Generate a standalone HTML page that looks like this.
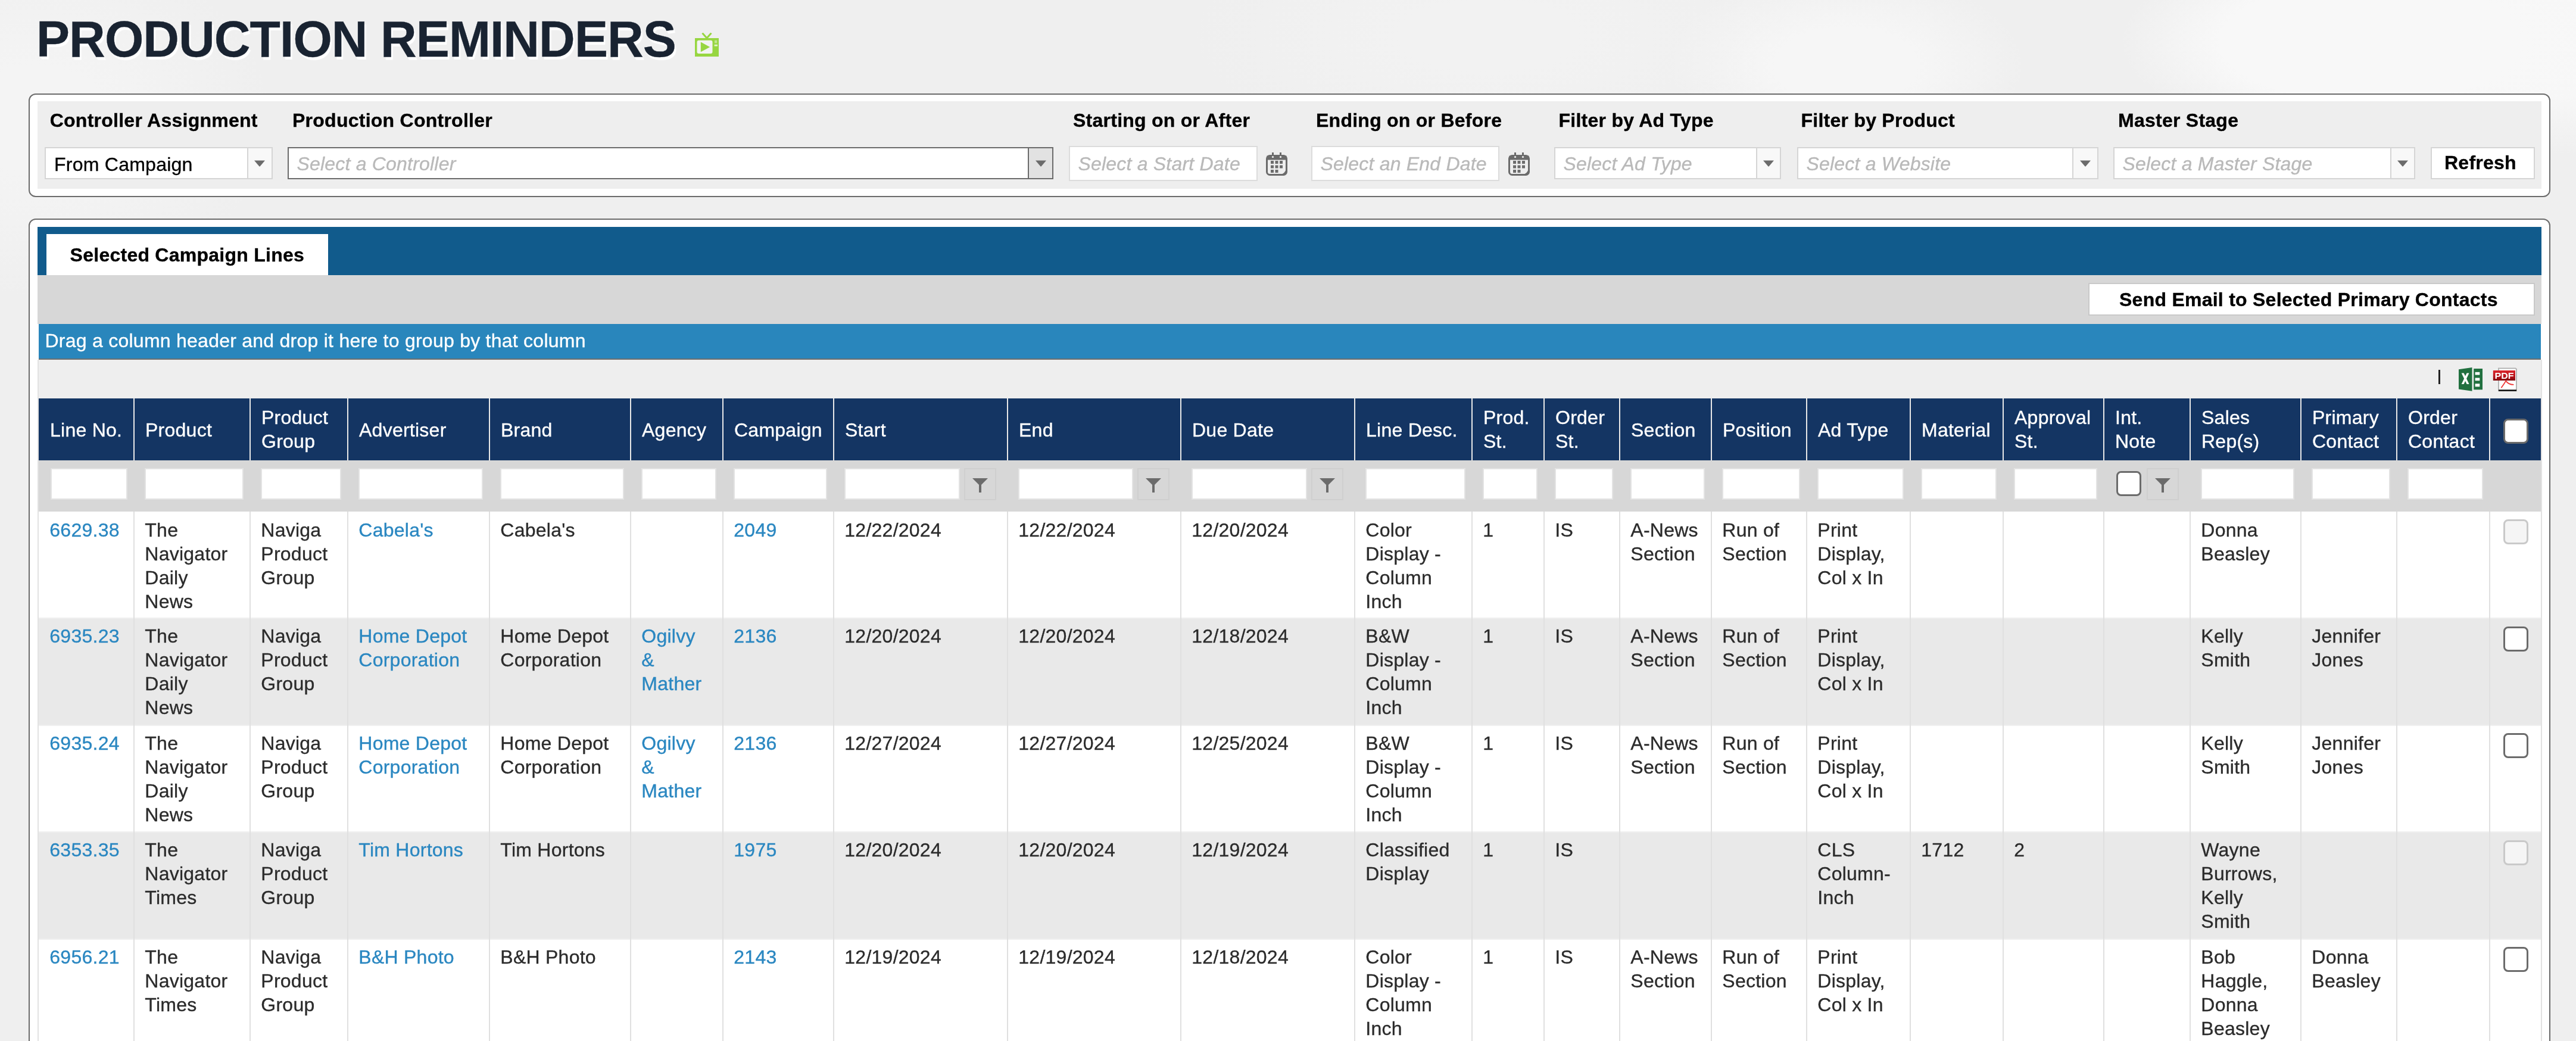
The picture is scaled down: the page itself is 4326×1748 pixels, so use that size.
<!DOCTYPE html><html><head><meta charset="utf-8"><title>Production Reminders</title><style>
*{margin:0;padding:0;box-sizing:border-box}
html,body{width:4326px;height:1748px;overflow:hidden}
body{position:relative;font-family:"Liberation Sans",sans-serif;color:#2b2b2b;
 background:#efefef;}
#w{position:absolute;left:0;top:0;width:4326px;height:1748px;overflow:hidden;will-change:transform}
.t{position:absolute;white-space:nowrap;letter-spacing:0.25px;-webkit-text-stroke:0.35px currentColor}
.b{position:absolute}
.bold{font-weight:bold;color:#000}
.ph{font-style:italic;color:#b9b9b9;letter-spacing:0.2px}
.lnk{color:#2a87c1}
.wh{color:#fff}
</style></head><body><div id="w">
<div class="b" style="left:0;top:0;width:4326px;height:1748px;background:radial-gradient(ellipse 420px 170px at 3980px 70px,#f8f8f8 60%,rgba(248,248,248,0) 100%),radial-gradient(ellipse 360px 200px at 4300px 60px,#f7f7f7 50%,rgba(247,247,247,0) 100%),radial-gradient(ellipse 300px 160px at 3100px 110px,#f6f6f6 40%,rgba(246,246,246,0) 100%),radial-gradient(ellipse 500px 200px at 2500px 60px,#f2f2f2 30%,rgba(242,242,242,0) 100%),radial-gradient(ellipse 400px 300px at 60px 200px,#f4f4f4 30%,rgba(244,244,244,0) 100%),#efefef"></div>
<div class="t " style="left:61.0px;top:15.1px;font-size:86px;line-height:100px;font-weight:bold;color:#192331;letter-spacing:-1px;text-shadow:3px 5px 1px #fff;transform:scaleX(0.978);transform-origin:0 0">PRODUCTION REMINDERS</div>
<svg class="b" style="left:1167px;top:55px" width="40" height="40" viewBox="0 0 40 40">
<rect x="0" y="9" width="40" height="31" fill="#97d641"/>
<path d="M12.5 0.5 L20 9 L27.5 0.5" stroke="#97d641" stroke-width="3" fill="none"/>
<rect x="3.5" y="12.7" width="26" height="22.3" rx="3" fill="#f3f3f3"/>
<path d="M9.8 15.6 L9.8 32.2 L25.2 24 Z" fill="#97d641"/>
<rect x="33" y="12.7" width="4.2" height="4.7" fill="#c2e592"/>
<rect x="32.6" y="19.8" width="5.4" height="2.8" fill="#e2f3cc"/>
</svg>
<div class="b" style="left:48px;top:157px;width:4235px;height:174px;border:2px solid #6b6b6b;border-radius:12px;background:#fff"></div>
<div class="b" style="left:63px;top:170px;width:4205px;height:147px;background:#eeeeee"></div>
<div class="t bold" style="left:83.7px;top:182.3px;font-size:32px;line-height:40px;">Controller Assignment</div>
<div class="t bold" style="left:491.0px;top:182.3px;font-size:32px;line-height:40px;">Production Controller</div>
<div class="t bold" style="left:1802.0px;top:182.3px;font-size:32px;line-height:40px;">Starting on or After</div>
<div class="t bold" style="left:2210.0px;top:182.3px;font-size:32px;line-height:40px;">Ending on or Before</div>
<div class="t bold" style="left:2617.5px;top:182.3px;font-size:32px;line-height:40px;">Filter by Ad Type</div>
<div class="t bold" style="left:3024.5px;top:182.3px;font-size:32px;line-height:40px;">Filter by Product</div>
<div class="t bold" style="left:3557.0px;top:182.3px;font-size:32px;line-height:40px;">Master Stage</div>
<div class="b" style="left:75px;top:247px;width:383px;height:54px;border:2px solid #d5d5d5;background:#fff"></div>
<div class="b" style="left:414.5px;top:249px;width:41.5px;height:50px;border-left:2px solid #d5d5d5;background:#f8f8f8"></div>
<svg class="b" style="left:427.2px;top:269px" width="18" height="11" viewBox="0 0 18 11"><path d="M0 0.5H18L9.5 10.5H8.5Z" fill="#6b6b6b"/></svg>
<div class="t " style="left:91.0px;top:255.9px;font-size:32px;line-height:40px;color:#000">From Campaign</div>
<div class="b" style="left:483px;top:247px;width:1286px;height:54px;border:2px solid #6b6b6b;background:#fff"></div>
<div class="b" style="left:1726px;top:249px;width:41px;height:50px;border-left:2px solid #6b6b6b;background:#e2e2e2"></div>
<svg class="b" style="left:1738.5px;top:269px" width="18" height="11" viewBox="0 0 18 11"><path d="M0 0.5H18L9.5 10.5H8.5Z" fill="#6b6b6b"/></svg>
<div class="t ph" style="left:498.5px;top:254.9px;font-size:32px;line-height:40px;">Select a Controller</div>
<div class="b" style="left:1795px;top:245px;width:317px;height:59px;border:2px solid #dcdcdc;background:#fff"></div>
<div class="t ph" style="left:1810.5px;top:254.9px;font-size:32px;line-height:40px;">Select a Start Date</div>
<div class="b" style="left:2202px;top:245px;width:316px;height:59px;border:2px solid #dcdcdc;background:#fff"></div>
<div class="t ph" style="left:2217.5px;top:254.9px;font-size:32px;line-height:40px;">Select an End Date</div>
<div class="b" style="left:2610px;top:247px;width:381px;height:54px;border:2px solid #d5d5d5;background:#fff"></div>
<div class="b" style="left:2949px;top:249px;width:40px;height:50px;border-left:2px solid #d5d5d5;background:#f8f8f8"></div>
<svg class="b" style="left:2961.0px;top:269px" width="18" height="11" viewBox="0 0 18 11"><path d="M0 0.5H18L9.5 10.5H8.5Z" fill="#6b6b6b"/></svg>
<div class="t ph" style="left:2625.5px;top:254.9px;font-size:32px;line-height:40px;">Select Ad Type</div>
<div class="b" style="left:3018px;top:247px;width:506px;height:54px;border:2px solid #d5d5d5;background:#fff"></div>
<div class="b" style="left:3480px;top:249px;width:42px;height:50px;border-left:2px solid #d5d5d5;background:#f8f8f8"></div>
<svg class="b" style="left:3493.0px;top:269px" width="18" height="11" viewBox="0 0 18 11"><path d="M0 0.5H18L9.5 10.5H8.5Z" fill="#6b6b6b"/></svg>
<div class="t ph" style="left:3033.5px;top:254.9px;font-size:32px;line-height:40px;">Select a Website</div>
<div class="b" style="left:3549px;top:247px;width:507px;height:54px;border:2px solid #d5d5d5;background:#fff"></div>
<div class="b" style="left:4014px;top:249px;width:40px;height:50px;border-left:2px solid #d5d5d5;background:#f8f8f8"></div>
<svg class="b" style="left:4026.0px;top:269px" width="18" height="11" viewBox="0 0 18 11"><path d="M0 0.5H18L9.5 10.5H8.5Z" fill="#6b6b6b"/></svg>
<div class="t ph" style="left:3564.5px;top:254.9px;font-size:32px;line-height:40px;">Select a Master Stage</div>
<div class="b" style="left:4082px;top:247px;width:175px;height:54px;border:2px solid #d5d5d5;background:#fff"></div>
<div class="t bold" style="left:4105.0px;top:253.4px;font-size:32px;line-height:40px;">Refresh</div>
<svg class="b" style="left:2126px;top:256px" width="36" height="39" viewBox="0 0 36 39">
<rect x="1.5" y="5.5" width="33" height="32" rx="5" fill="none" stroke="#6b6b6b" stroke-width="3"/>
<rect x="1.5" y="5.5" width="33" height="7" fill="#6b6b6b"/>
<rect x="10" y="0" width="3" height="7" fill="#6b6b6b"/><rect x="23" y="0" width="3" height="7" fill="#6b6b6b"/>
<circle cx="11.5" cy="7.5" r="1.6" fill="#f4f4f4"/><circle cx="24.5" cy="7.5" r="1.6" fill="#f4f4f4"/>
<g fill="#6b6b6b"><rect x="8" y="14" width="5" height="5"/><rect x="15.5" y="14" width="5" height="5"/><rect x="23" y="14" width="5" height="5"/>
<rect x="8" y="21.5" width="5" height="5"/><rect x="15.5" y="21.5" width="5" height="5"/><rect x="23" y="21.5" width="5" height="5"/>
<rect x="8" y="29" width="5" height="5"/><rect x="15.5" y="29" width="5" height="5"/></g>
<path d="M34 27 Q32 36 24 37 L34 37Z" fill="#6b6b6b"/>
</svg>
<svg class="b" style="left:2533px;top:256px" width="36" height="39" viewBox="0 0 36 39">
<rect x="1.5" y="5.5" width="33" height="32" rx="5" fill="none" stroke="#6b6b6b" stroke-width="3"/>
<rect x="1.5" y="5.5" width="33" height="7" fill="#6b6b6b"/>
<rect x="10" y="0" width="3" height="7" fill="#6b6b6b"/><rect x="23" y="0" width="3" height="7" fill="#6b6b6b"/>
<circle cx="11.5" cy="7.5" r="1.6" fill="#f4f4f4"/><circle cx="24.5" cy="7.5" r="1.6" fill="#f4f4f4"/>
<g fill="#6b6b6b"><rect x="8" y="14" width="5" height="5"/><rect x="15.5" y="14" width="5" height="5"/><rect x="23" y="14" width="5" height="5"/>
<rect x="8" y="21.5" width="5" height="5"/><rect x="15.5" y="21.5" width="5" height="5"/><rect x="23" y="21.5" width="5" height="5"/>
<rect x="8" y="29" width="5" height="5"/><rect x="15.5" y="29" width="5" height="5"/></g>
<path d="M34 27 Q32 36 24 37 L34 37Z" fill="#6b6b6b"/>
</svg>
<div class="b" style="left:48px;top:367px;width:4235px;height:1533px;border:2px solid #6b6b6b;border-radius:12px;background:#fff"></div>
<div class="b" style="left:63px;top:381px;width:4205px;height:81px;background:#115b8c"></div>
<div class="b" style="left:78px;top:393px;width:473px;height:69px;background:#fff"></div>
<div class="t bold" style="left:117.6px;top:407.9px;font-size:32px;line-height:40px;">Selected Campaign Lines</div>
<div class="b" style="left:63px;top:462px;width:4205px;height:82px;background:#d7d7d7"></div>
<div class="b" style="left:3507px;top:475px;width:750px;height:55px;border:2px solid #c9c9c9;background:#fff"></div>
<div class="t bold" style="left:3559.0px;top:482.6px;font-size:32px;line-height:40px;">Send Email to Selected Primary Contacts</div>
<div class="b" style="left:65px;top:544px;width:4202px;height:60px;background:#2986bc;border-bottom:2px solid #6e6e6e"></div>
<div class="t wh" style="left:75.5px;top:551.9px;font-size:32px;line-height:40px;">Drag a column header and drop it here to group by that column</div>
<div class="b" style="left:65px;top:604px;width:4202px;height:65px;background:#eeeeee"></div>
<div class="b" style="left:4095px;top:621px;width:3px;height:24px;background:#222"></div>
<svg class="b" style="left:4125px;top:614px" width="110" height="46" viewBox="0 0 110 46">
<path d="M4 6.2 L26.5 3 L26.5 42.7 L4 39.6 Z" fill="#21703f"/>
<rect x="29.2" y="5" width="14.8" height="35.3" fill="#21703f"/>
<g fill="#fff"><rect x="31.6" y="10.8" width="7.7" height="4.7"/><rect x="31.6" y="20.5" width="7.7" height="4.7"/><rect x="31.6" y="30.3" width="7.7" height="5"/></g>
<path d="M8.7 12.4 L12.6 12.4 L15.1 17.6 L17.6 12.4 L21.5 12.4 L17.1 21.7 L21.5 31 L17.6 31 L15.1 25.8 L12.6 31 L8.7 31 L13.1 21.7 Z" fill="#fff"/>
<path d="M71 4.5 L99.5 4.5 L101 6 L101 42 L71 42 Z" fill="#fff" stroke="#b5b5b5" stroke-width="2"/>
<rect x="71" y="40.3" width="30" height="2.6" fill="#111"/>
<defs><linearGradient id="pg" x1="0" y1="0" x2="0" y2="1"><stop offset="0" stop-color="#d9252a"/><stop offset="0.6" stop-color="#b8121a"/><stop offset="1" stop-color="#7e0a0d"/></linearGradient></defs>
<rect x="61.8" y="8" width="37.2" height="17" fill="url(#pg)"/>
<text x="80.5" y="22.4" font-family="Liberation Sans" font-weight="bold" font-size="15.5" fill="#fff" text-anchor="middle" textLength="32" lengthAdjust="spacingAndGlyphs">PDF</text>
<path d="M75.4 37.2 Q80 31 83.2 25.6 Q88 32 96.4 31.8" stroke="#ee3333" stroke-width="1.8" fill="none"/>
</svg>
<div class="b" style="left:65px;top:669px;width:4202px;height:104px;background:#143563"></div>
<div class="b" style="left:224px;top:669px;width:2px;height:104px;background:#e8e8e8"></div>
<div class="b" style="left:419px;top:669px;width:2px;height:104px;background:#e8e8e8"></div>
<div class="b" style="left:583px;top:669px;width:2px;height:104px;background:#e8e8e8"></div>
<div class="b" style="left:821px;top:669px;width:2px;height:104px;background:#e8e8e8"></div>
<div class="b" style="left:1058px;top:669px;width:2px;height:104px;background:#e8e8e8"></div>
<div class="b" style="left:1213px;top:669px;width:2px;height:104px;background:#e8e8e8"></div>
<div class="b" style="left:1399px;top:669px;width:2px;height:104px;background:#e8e8e8"></div>
<div class="b" style="left:1691px;top:669px;width:2px;height:104px;background:#e8e8e8"></div>
<div class="b" style="left:1982px;top:669px;width:2px;height:104px;background:#e8e8e8"></div>
<div class="b" style="left:2274px;top:669px;width:2px;height:104px;background:#e8e8e8"></div>
<div class="b" style="left:2471px;top:669px;width:2px;height:104px;background:#e8e8e8"></div>
<div class="b" style="left:2592px;top:669px;width:2px;height:104px;background:#e8e8e8"></div>
<div class="b" style="left:2719px;top:669px;width:2px;height:104px;background:#e8e8e8"></div>
<div class="b" style="left:2873px;top:669px;width:2px;height:104px;background:#e8e8e8"></div>
<div class="b" style="left:3033px;top:669px;width:2px;height:104px;background:#e8e8e8"></div>
<div class="b" style="left:3207px;top:669px;width:2px;height:104px;background:#e8e8e8"></div>
<div class="b" style="left:3363px;top:669px;width:2px;height:104px;background:#e8e8e8"></div>
<div class="b" style="left:3532px;top:669px;width:2px;height:104px;background:#e8e8e8"></div>
<div class="b" style="left:3677px;top:669px;width:2px;height:104px;background:#e8e8e8"></div>
<div class="b" style="left:3863px;top:669px;width:2px;height:104px;background:#e8e8e8"></div>
<div class="b" style="left:4024px;top:669px;width:2px;height:104px;background:#e8e8e8"></div>
<div class="b" style="left:4180px;top:669px;width:2px;height:104px;background:#e8e8e8"></div>
<div class="t wh" style="left:84.0px;top:701.5px;font-size:32px;line-height:40px;">Line No.</div>
<div class="t wh" style="left:244.0px;top:701.5px;font-size:32px;line-height:40px;">Product</div>
<div class="t wh" style="left:439.0px;top:680.7px;font-size:32px;line-height:40px;">Product<br>Group</div>
<div class="t wh" style="left:603.0px;top:701.5px;font-size:32px;line-height:40px;">Advertiser</div>
<div class="t wh" style="left:841.0px;top:701.5px;font-size:32px;line-height:40px;">Brand</div>
<div class="t wh" style="left:1078.0px;top:701.5px;font-size:32px;line-height:40px;">Agency</div>
<div class="t wh" style="left:1233.0px;top:701.5px;font-size:32px;line-height:40px;">Campaign</div>
<div class="t wh" style="left:1419.0px;top:701.5px;font-size:32px;line-height:40px;">Start</div>
<div class="t wh" style="left:1711.0px;top:701.5px;font-size:32px;line-height:40px;">End</div>
<div class="t wh" style="left:2002.0px;top:701.5px;font-size:32px;line-height:40px;">Due Date</div>
<div class="t wh" style="left:2294.0px;top:701.5px;font-size:32px;line-height:40px;">Line Desc.</div>
<div class="t wh" style="left:2491.0px;top:680.7px;font-size:32px;line-height:40px;">Prod.<br>St.</div>
<div class="t wh" style="left:2612.0px;top:680.7px;font-size:32px;line-height:40px;">Order<br>St.</div>
<div class="t wh" style="left:2739.0px;top:701.5px;font-size:32px;line-height:40px;">Section</div>
<div class="t wh" style="left:2893.0px;top:701.5px;font-size:32px;line-height:40px;">Position</div>
<div class="t wh" style="left:3053.0px;top:701.5px;font-size:32px;line-height:40px;">Ad Type</div>
<div class="t wh" style="left:3227.0px;top:701.5px;font-size:32px;line-height:40px;">Material</div>
<div class="t wh" style="left:3383.0px;top:680.7px;font-size:32px;line-height:40px;">Approval<br>St.</div>
<div class="t wh" style="left:3552.0px;top:680.7px;font-size:32px;line-height:40px;">Int.<br>Note</div>
<div class="t wh" style="left:3697.0px;top:680.7px;font-size:32px;line-height:40px;">Sales<br>Rep(s)</div>
<div class="t wh" style="left:3883.0px;top:680.7px;font-size:32px;line-height:40px;">Primary<br>Contact</div>
<div class="t wh" style="left:4044.0px;top:680.7px;font-size:32px;line-height:40px;">Order<br>Contact</div>
<div class="b" style="left:4204px;top:703px;width:42px;height:42px;background:#fff;border:3px solid #6b6b6b;border-radius:8px"></div>
<div class="b" style="left:65px;top:773px;width:4202px;height:86px;background:#d7d7d7"></div>
<div class="b" style="left:85px;top:786px;width:129px;height:53px;background:#fff;border:2px solid #e3e3e3"></div>
<div class="b" style="left:243px;top:786px;width:166px;height:53px;background:#fff;border:2px solid #e3e3e3"></div>
<div class="b" style="left:438px;top:786px;width:135px;height:53px;background:#fff;border:2px solid #e3e3e3"></div>
<div class="b" style="left:602px;top:786px;width:209px;height:53px;background:#fff;border:2px solid #e3e3e3"></div>
<div class="b" style="left:840px;top:786px;width:208px;height:53px;background:#fff;border:2px solid #e3e3e3"></div>
<div class="b" style="left:1077px;top:786px;width:126px;height:53px;background:#fff;border:2px solid #e3e3e3"></div>
<div class="b" style="left:1232px;top:786px;width:157px;height:53px;background:#fff;border:2px solid #e3e3e3"></div>
<div class="b" style="left:1418px;top:786px;width:194px;height:53px;background:#fff;border:2px solid #e3e3e3"></div>
<div class="b" style="left:1619px;top:786px;width:54px;height:54px;border:2px solid #cfcfcf"></div>
<svg class="b" style="left:1633px;top:802px" width="26" height="26" viewBox="0 0 26 26"><path d="M0 1 H26 L15 12 V25 H11 V12Z" fill="#6b6b6b"/></svg>
<div class="b" style="left:1710px;top:786px;width:193px;height:53px;background:#fff;border:2px solid #e3e3e3"></div>
<div class="b" style="left:1910px;top:786px;width:54px;height:54px;border:2px solid #cfcfcf"></div>
<svg class="b" style="left:1924px;top:802px" width="26" height="26" viewBox="0 0 26 26"><path d="M0 1 H26 L15 12 V25 H11 V12Z" fill="#6b6b6b"/></svg>
<div class="b" style="left:2001px;top:786px;width:194px;height:53px;background:#fff;border:2px solid #e3e3e3"></div>
<div class="b" style="left:2202px;top:786px;width:54px;height:54px;border:2px solid #cfcfcf"></div>
<svg class="b" style="left:2216px;top:802px" width="26" height="26" viewBox="0 0 26 26"><path d="M0 1 H26 L15 12 V25 H11 V12Z" fill="#6b6b6b"/></svg>
<div class="b" style="left:2293px;top:786px;width:168px;height:53px;background:#fff;border:2px solid #e3e3e3"></div>
<div class="b" style="left:2490px;top:786px;width:92px;height:53px;background:#fff;border:2px solid #e3e3e3"></div>
<div class="b" style="left:2611px;top:786px;width:98px;height:53px;background:#fff;border:2px solid #e3e3e3"></div>
<div class="b" style="left:2738px;top:786px;width:125px;height:53px;background:#fff;border:2px solid #e3e3e3"></div>
<div class="b" style="left:2892px;top:786px;width:131px;height:53px;background:#fff;border:2px solid #e3e3e3"></div>
<div class="b" style="left:3052px;top:786px;width:145px;height:53px;background:#fff;border:2px solid #e3e3e3"></div>
<div class="b" style="left:3226px;top:786px;width:127px;height:53px;background:#fff;border:2px solid #e3e3e3"></div>
<div class="b" style="left:3382px;top:786px;width:140px;height:53px;background:#fff;border:2px solid #e3e3e3"></div>
<div class="b" style="left:3554px;top:791px;width:42px;height:42px;background:#fff;border:3px solid #6b6b6b;border-radius:8px"></div>
<div class="b" style="left:3605px;top:786px;width:54px;height:54px;border:2px solid #cfcfcf"></div>
<svg class="b" style="left:3619px;top:802px" width="26" height="26" viewBox="0 0 26 26"><path d="M0 1 H26 L15 12 V25 H11 V12Z" fill="#6b6b6b"/></svg>
<div class="b" style="left:3696px;top:786px;width:157px;height:53px;background:#fff;border:2px solid #e3e3e3"></div>
<div class="b" style="left:3882px;top:786px;width:132px;height:53px;background:#fff;border:2px solid #e3e3e3"></div>
<div class="b" style="left:4043px;top:786px;width:127px;height:53px;background:#fff;border:2px solid #e3e3e3"></div>
<div class="b" style="left:65px;top:859px;width:4202px;height:178px;background:#fff"></div>
<div class="b" style="left:224px;top:859px;width:2px;height:178px;background:#e0e0e0"></div>
<div class="b" style="left:419px;top:859px;width:2px;height:178px;background:#e0e0e0"></div>
<div class="b" style="left:583px;top:859px;width:2px;height:178px;background:#e0e0e0"></div>
<div class="b" style="left:821px;top:859px;width:2px;height:178px;background:#e0e0e0"></div>
<div class="b" style="left:1058px;top:859px;width:2px;height:178px;background:#e0e0e0"></div>
<div class="b" style="left:1213px;top:859px;width:2px;height:178px;background:#e0e0e0"></div>
<div class="b" style="left:1399px;top:859px;width:2px;height:178px;background:#e0e0e0"></div>
<div class="b" style="left:1691px;top:859px;width:2px;height:178px;background:#e0e0e0"></div>
<div class="b" style="left:1982px;top:859px;width:2px;height:178px;background:#e0e0e0"></div>
<div class="b" style="left:2274px;top:859px;width:2px;height:178px;background:#e0e0e0"></div>
<div class="b" style="left:2471px;top:859px;width:2px;height:178px;background:#e0e0e0"></div>
<div class="b" style="left:2592px;top:859px;width:2px;height:178px;background:#e0e0e0"></div>
<div class="b" style="left:2719px;top:859px;width:2px;height:178px;background:#e0e0e0"></div>
<div class="b" style="left:2873px;top:859px;width:2px;height:178px;background:#e0e0e0"></div>
<div class="b" style="left:3033px;top:859px;width:2px;height:178px;background:#e0e0e0"></div>
<div class="b" style="left:3207px;top:859px;width:2px;height:178px;background:#e0e0e0"></div>
<div class="b" style="left:3363px;top:859px;width:2px;height:178px;background:#e0e0e0"></div>
<div class="b" style="left:3532px;top:859px;width:2px;height:178px;background:#e0e0e0"></div>
<div class="b" style="left:3677px;top:859px;width:2px;height:178px;background:#e0e0e0"></div>
<div class="b" style="left:3863px;top:859px;width:2px;height:178px;background:#e0e0e0"></div>
<div class="b" style="left:4024px;top:859px;width:2px;height:178px;background:#e0e0e0"></div>
<div class="b" style="left:4180px;top:859px;width:2px;height:178px;background:#e0e0e0"></div>
<div class="t " style="left:83.3px;top:870.2px;font-size:32px;line-height:40px;"><span class="lnk">6629.38</span></div>
<div class="t " style="left:243.3px;top:870.2px;font-size:32px;line-height:40px;">The<br>Navigator<br>Daily<br>News</div>
<div class="t " style="left:438.3px;top:870.2px;font-size:32px;line-height:40px;">Naviga<br>Product<br>Group</div>
<div class="t " style="left:602.3px;top:870.2px;font-size:32px;line-height:40px;"><span class="lnk">Cabela's</span></div>
<div class="t " style="left:840.3px;top:870.2px;font-size:32px;line-height:40px;">Cabela's</div>
<div class="t " style="left:1232.3px;top:870.2px;font-size:32px;line-height:40px;"><span class="lnk">2049</span></div>
<div class="t " style="left:1418.3px;top:870.2px;font-size:32px;line-height:40px;">12/22/2024</div>
<div class="t " style="left:1710.3px;top:870.2px;font-size:32px;line-height:40px;">12/22/2024</div>
<div class="t " style="left:2001.3px;top:870.2px;font-size:32px;line-height:40px;">12/20/2024</div>
<div class="t " style="left:2293.3px;top:870.2px;font-size:32px;line-height:40px;">Color<br>Display -<br>Column<br>Inch</div>
<div class="t " style="left:2490.3px;top:870.2px;font-size:32px;line-height:40px;">1</div>
<div class="t " style="left:2611.3px;top:870.2px;font-size:32px;line-height:40px;">IS</div>
<div class="t " style="left:2738.3px;top:870.2px;font-size:32px;line-height:40px;">A-News<br>Section</div>
<div class="t " style="left:2892.3px;top:870.2px;font-size:32px;line-height:40px;">Run of<br>Section</div>
<div class="t " style="left:3052.3px;top:870.2px;font-size:32px;line-height:40px;">Print<br>Display,<br>Col x In</div>
<div class="t " style="left:3696.3px;top:870.2px;font-size:32px;line-height:40px;">Donna<br>Beasley</div>
<div class="b" style="left:4204px;top:872px;width:42px;height:42px;background:#f5f5f5;border:3px solid #c9c9c9;border-radius:8px"></div>
<div class="b" style="left:65px;top:1037px;width:4202px;height:180px;background:#e9e9e9"></div>
<div class="b" style="left:65px;top:1037px;width:4202px;height:2px;background:#efefef"></div>
<div class="b" style="left:224px;top:1037px;width:2px;height:180px;background:#e0e0e0"></div>
<div class="b" style="left:419px;top:1037px;width:2px;height:180px;background:#e0e0e0"></div>
<div class="b" style="left:583px;top:1037px;width:2px;height:180px;background:#e0e0e0"></div>
<div class="b" style="left:821px;top:1037px;width:2px;height:180px;background:#e0e0e0"></div>
<div class="b" style="left:1058px;top:1037px;width:2px;height:180px;background:#e0e0e0"></div>
<div class="b" style="left:1213px;top:1037px;width:2px;height:180px;background:#e0e0e0"></div>
<div class="b" style="left:1399px;top:1037px;width:2px;height:180px;background:#e0e0e0"></div>
<div class="b" style="left:1691px;top:1037px;width:2px;height:180px;background:#e0e0e0"></div>
<div class="b" style="left:1982px;top:1037px;width:2px;height:180px;background:#e0e0e0"></div>
<div class="b" style="left:2274px;top:1037px;width:2px;height:180px;background:#e0e0e0"></div>
<div class="b" style="left:2471px;top:1037px;width:2px;height:180px;background:#e0e0e0"></div>
<div class="b" style="left:2592px;top:1037px;width:2px;height:180px;background:#e0e0e0"></div>
<div class="b" style="left:2719px;top:1037px;width:2px;height:180px;background:#e0e0e0"></div>
<div class="b" style="left:2873px;top:1037px;width:2px;height:180px;background:#e0e0e0"></div>
<div class="b" style="left:3033px;top:1037px;width:2px;height:180px;background:#e0e0e0"></div>
<div class="b" style="left:3207px;top:1037px;width:2px;height:180px;background:#e0e0e0"></div>
<div class="b" style="left:3363px;top:1037px;width:2px;height:180px;background:#e0e0e0"></div>
<div class="b" style="left:3532px;top:1037px;width:2px;height:180px;background:#e0e0e0"></div>
<div class="b" style="left:3677px;top:1037px;width:2px;height:180px;background:#e0e0e0"></div>
<div class="b" style="left:3863px;top:1037px;width:2px;height:180px;background:#e0e0e0"></div>
<div class="b" style="left:4024px;top:1037px;width:2px;height:180px;background:#e0e0e0"></div>
<div class="b" style="left:4180px;top:1037px;width:2px;height:180px;background:#e0e0e0"></div>
<div class="t " style="left:83.3px;top:1048.2px;font-size:32px;line-height:40px;"><span class="lnk">6935.23</span></div>
<div class="t " style="left:243.3px;top:1048.2px;font-size:32px;line-height:40px;">The<br>Navigator<br>Daily<br>News</div>
<div class="t " style="left:438.3px;top:1048.2px;font-size:32px;line-height:40px;">Naviga<br>Product<br>Group</div>
<div class="t " style="left:602.3px;top:1048.2px;font-size:32px;line-height:40px;"><span class="lnk">Home Depot<br>Corporation</span></div>
<div class="t " style="left:840.3px;top:1048.2px;font-size:32px;line-height:40px;">Home Depot<br>Corporation</div>
<div class="t " style="left:1077.3px;top:1048.2px;font-size:32px;line-height:40px;"><span class="lnk">Ogilvy<br>&amp;<br>Mather</span></div>
<div class="t " style="left:1232.3px;top:1048.2px;font-size:32px;line-height:40px;"><span class="lnk">2136</span></div>
<div class="t " style="left:1418.3px;top:1048.2px;font-size:32px;line-height:40px;">12/20/2024</div>
<div class="t " style="left:1710.3px;top:1048.2px;font-size:32px;line-height:40px;">12/20/2024</div>
<div class="t " style="left:2001.3px;top:1048.2px;font-size:32px;line-height:40px;">12/18/2024</div>
<div class="t " style="left:2293.3px;top:1048.2px;font-size:32px;line-height:40px;">B&amp;W<br>Display -<br>Column<br>Inch</div>
<div class="t " style="left:2490.3px;top:1048.2px;font-size:32px;line-height:40px;">1</div>
<div class="t " style="left:2611.3px;top:1048.2px;font-size:32px;line-height:40px;">IS</div>
<div class="t " style="left:2738.3px;top:1048.2px;font-size:32px;line-height:40px;">A-News<br>Section</div>
<div class="t " style="left:2892.3px;top:1048.2px;font-size:32px;line-height:40px;">Run of<br>Section</div>
<div class="t " style="left:3052.3px;top:1048.2px;font-size:32px;line-height:40px;">Print<br>Display,<br>Col x In</div>
<div class="t " style="left:3696.3px;top:1048.2px;font-size:32px;line-height:40px;">Kelly<br>Smith</div>
<div class="t " style="left:3882.3px;top:1048.2px;font-size:32px;line-height:40px;">Jennifer<br>Jones</div>
<div class="b" style="left:4204px;top:1052px;width:42px;height:42px;background:#fff;border:3px solid #6b6b6b;border-radius:8px"></div>
<div class="b" style="left:65px;top:1217px;width:4202px;height:179px;background:#fff"></div>
<div class="b" style="left:65px;top:1217px;width:4202px;height:2px;background:#efefef"></div>
<div class="b" style="left:224px;top:1217px;width:2px;height:179px;background:#e0e0e0"></div>
<div class="b" style="left:419px;top:1217px;width:2px;height:179px;background:#e0e0e0"></div>
<div class="b" style="left:583px;top:1217px;width:2px;height:179px;background:#e0e0e0"></div>
<div class="b" style="left:821px;top:1217px;width:2px;height:179px;background:#e0e0e0"></div>
<div class="b" style="left:1058px;top:1217px;width:2px;height:179px;background:#e0e0e0"></div>
<div class="b" style="left:1213px;top:1217px;width:2px;height:179px;background:#e0e0e0"></div>
<div class="b" style="left:1399px;top:1217px;width:2px;height:179px;background:#e0e0e0"></div>
<div class="b" style="left:1691px;top:1217px;width:2px;height:179px;background:#e0e0e0"></div>
<div class="b" style="left:1982px;top:1217px;width:2px;height:179px;background:#e0e0e0"></div>
<div class="b" style="left:2274px;top:1217px;width:2px;height:179px;background:#e0e0e0"></div>
<div class="b" style="left:2471px;top:1217px;width:2px;height:179px;background:#e0e0e0"></div>
<div class="b" style="left:2592px;top:1217px;width:2px;height:179px;background:#e0e0e0"></div>
<div class="b" style="left:2719px;top:1217px;width:2px;height:179px;background:#e0e0e0"></div>
<div class="b" style="left:2873px;top:1217px;width:2px;height:179px;background:#e0e0e0"></div>
<div class="b" style="left:3033px;top:1217px;width:2px;height:179px;background:#e0e0e0"></div>
<div class="b" style="left:3207px;top:1217px;width:2px;height:179px;background:#e0e0e0"></div>
<div class="b" style="left:3363px;top:1217px;width:2px;height:179px;background:#e0e0e0"></div>
<div class="b" style="left:3532px;top:1217px;width:2px;height:179px;background:#e0e0e0"></div>
<div class="b" style="left:3677px;top:1217px;width:2px;height:179px;background:#e0e0e0"></div>
<div class="b" style="left:3863px;top:1217px;width:2px;height:179px;background:#e0e0e0"></div>
<div class="b" style="left:4024px;top:1217px;width:2px;height:179px;background:#e0e0e0"></div>
<div class="b" style="left:4180px;top:1217px;width:2px;height:179px;background:#e0e0e0"></div>
<div class="t " style="left:83.3px;top:1228.2px;font-size:32px;line-height:40px;"><span class="lnk">6935.24</span></div>
<div class="t " style="left:243.3px;top:1228.2px;font-size:32px;line-height:40px;">The<br>Navigator<br>Daily<br>News</div>
<div class="t " style="left:438.3px;top:1228.2px;font-size:32px;line-height:40px;">Naviga<br>Product<br>Group</div>
<div class="t " style="left:602.3px;top:1228.2px;font-size:32px;line-height:40px;"><span class="lnk">Home Depot<br>Corporation</span></div>
<div class="t " style="left:840.3px;top:1228.2px;font-size:32px;line-height:40px;">Home Depot<br>Corporation</div>
<div class="t " style="left:1077.3px;top:1228.2px;font-size:32px;line-height:40px;"><span class="lnk">Ogilvy<br>&amp;<br>Mather</span></div>
<div class="t " style="left:1232.3px;top:1228.2px;font-size:32px;line-height:40px;"><span class="lnk">2136</span></div>
<div class="t " style="left:1418.3px;top:1228.2px;font-size:32px;line-height:40px;">12/27/2024</div>
<div class="t " style="left:1710.3px;top:1228.2px;font-size:32px;line-height:40px;">12/27/2024</div>
<div class="t " style="left:2001.3px;top:1228.2px;font-size:32px;line-height:40px;">12/25/2024</div>
<div class="t " style="left:2293.3px;top:1228.2px;font-size:32px;line-height:40px;">B&amp;W<br>Display -<br>Column<br>Inch</div>
<div class="t " style="left:2490.3px;top:1228.2px;font-size:32px;line-height:40px;">1</div>
<div class="t " style="left:2611.3px;top:1228.2px;font-size:32px;line-height:40px;">IS</div>
<div class="t " style="left:2738.3px;top:1228.2px;font-size:32px;line-height:40px;">A-News<br>Section</div>
<div class="t " style="left:2892.3px;top:1228.2px;font-size:32px;line-height:40px;">Run of<br>Section</div>
<div class="t " style="left:3052.3px;top:1228.2px;font-size:32px;line-height:40px;">Print<br>Display,<br>Col x In</div>
<div class="t " style="left:3696.3px;top:1228.2px;font-size:32px;line-height:40px;">Kelly<br>Smith</div>
<div class="t " style="left:3882.3px;top:1228.2px;font-size:32px;line-height:40px;">Jennifer<br>Jones</div>
<div class="b" style="left:4204px;top:1231px;width:42px;height:42px;background:#fff;border:3px solid #6b6b6b;border-radius:8px"></div>
<div class="b" style="left:65px;top:1396px;width:4202px;height:180px;background:#e9e9e9"></div>
<div class="b" style="left:65px;top:1396px;width:4202px;height:2px;background:#efefef"></div>
<div class="b" style="left:224px;top:1396px;width:2px;height:180px;background:#e0e0e0"></div>
<div class="b" style="left:419px;top:1396px;width:2px;height:180px;background:#e0e0e0"></div>
<div class="b" style="left:583px;top:1396px;width:2px;height:180px;background:#e0e0e0"></div>
<div class="b" style="left:821px;top:1396px;width:2px;height:180px;background:#e0e0e0"></div>
<div class="b" style="left:1058px;top:1396px;width:2px;height:180px;background:#e0e0e0"></div>
<div class="b" style="left:1213px;top:1396px;width:2px;height:180px;background:#e0e0e0"></div>
<div class="b" style="left:1399px;top:1396px;width:2px;height:180px;background:#e0e0e0"></div>
<div class="b" style="left:1691px;top:1396px;width:2px;height:180px;background:#e0e0e0"></div>
<div class="b" style="left:1982px;top:1396px;width:2px;height:180px;background:#e0e0e0"></div>
<div class="b" style="left:2274px;top:1396px;width:2px;height:180px;background:#e0e0e0"></div>
<div class="b" style="left:2471px;top:1396px;width:2px;height:180px;background:#e0e0e0"></div>
<div class="b" style="left:2592px;top:1396px;width:2px;height:180px;background:#e0e0e0"></div>
<div class="b" style="left:2719px;top:1396px;width:2px;height:180px;background:#e0e0e0"></div>
<div class="b" style="left:2873px;top:1396px;width:2px;height:180px;background:#e0e0e0"></div>
<div class="b" style="left:3033px;top:1396px;width:2px;height:180px;background:#e0e0e0"></div>
<div class="b" style="left:3207px;top:1396px;width:2px;height:180px;background:#e0e0e0"></div>
<div class="b" style="left:3363px;top:1396px;width:2px;height:180px;background:#e0e0e0"></div>
<div class="b" style="left:3532px;top:1396px;width:2px;height:180px;background:#e0e0e0"></div>
<div class="b" style="left:3677px;top:1396px;width:2px;height:180px;background:#e0e0e0"></div>
<div class="b" style="left:3863px;top:1396px;width:2px;height:180px;background:#e0e0e0"></div>
<div class="b" style="left:4024px;top:1396px;width:2px;height:180px;background:#e0e0e0"></div>
<div class="b" style="left:4180px;top:1396px;width:2px;height:180px;background:#e0e0e0"></div>
<div class="t " style="left:83.3px;top:1407.2px;font-size:32px;line-height:40px;"><span class="lnk">6353.35</span></div>
<div class="t " style="left:243.3px;top:1407.2px;font-size:32px;line-height:40px;">The<br>Navigator<br>Times</div>
<div class="t " style="left:438.3px;top:1407.2px;font-size:32px;line-height:40px;">Naviga<br>Product<br>Group</div>
<div class="t " style="left:602.3px;top:1407.2px;font-size:32px;line-height:40px;"><span class="lnk">Tim Hortons</span></div>
<div class="t " style="left:840.3px;top:1407.2px;font-size:32px;line-height:40px;">Tim Hortons</div>
<div class="t " style="left:1232.3px;top:1407.2px;font-size:32px;line-height:40px;"><span class="lnk">1975</span></div>
<div class="t " style="left:1418.3px;top:1407.2px;font-size:32px;line-height:40px;">12/20/2024</div>
<div class="t " style="left:1710.3px;top:1407.2px;font-size:32px;line-height:40px;">12/20/2024</div>
<div class="t " style="left:2001.3px;top:1407.2px;font-size:32px;line-height:40px;">12/19/2024</div>
<div class="t " style="left:2293.3px;top:1407.2px;font-size:32px;line-height:40px;">Classified<br>Display</div>
<div class="t " style="left:2490.3px;top:1407.2px;font-size:32px;line-height:40px;">1</div>
<div class="t " style="left:2611.3px;top:1407.2px;font-size:32px;line-height:40px;">IS</div>
<div class="t " style="left:3052.3px;top:1407.2px;font-size:32px;line-height:40px;">CLS<br>Column-<br>Inch</div>
<div class="t " style="left:3226.3px;top:1407.2px;font-size:32px;line-height:40px;">1712</div>
<div class="t " style="left:3382.3px;top:1407.2px;font-size:32px;line-height:40px;">2</div>
<div class="t " style="left:3696.3px;top:1407.2px;font-size:32px;line-height:40px;">Wayne<br>Burrows,<br>Kelly<br>Smith</div>
<div class="b" style="left:4204px;top:1411px;width:42px;height:42px;background:#f5f5f5;border:3px solid #c9c9c9;border-radius:8px"></div>
<div class="b" style="left:65px;top:1576px;width:4202px;height:184px;background:#fff"></div>
<div class="b" style="left:65px;top:1576px;width:4202px;height:2px;background:#efefef"></div>
<div class="b" style="left:224px;top:1576px;width:2px;height:184px;background:#e0e0e0"></div>
<div class="b" style="left:419px;top:1576px;width:2px;height:184px;background:#e0e0e0"></div>
<div class="b" style="left:583px;top:1576px;width:2px;height:184px;background:#e0e0e0"></div>
<div class="b" style="left:821px;top:1576px;width:2px;height:184px;background:#e0e0e0"></div>
<div class="b" style="left:1058px;top:1576px;width:2px;height:184px;background:#e0e0e0"></div>
<div class="b" style="left:1213px;top:1576px;width:2px;height:184px;background:#e0e0e0"></div>
<div class="b" style="left:1399px;top:1576px;width:2px;height:184px;background:#e0e0e0"></div>
<div class="b" style="left:1691px;top:1576px;width:2px;height:184px;background:#e0e0e0"></div>
<div class="b" style="left:1982px;top:1576px;width:2px;height:184px;background:#e0e0e0"></div>
<div class="b" style="left:2274px;top:1576px;width:2px;height:184px;background:#e0e0e0"></div>
<div class="b" style="left:2471px;top:1576px;width:2px;height:184px;background:#e0e0e0"></div>
<div class="b" style="left:2592px;top:1576px;width:2px;height:184px;background:#e0e0e0"></div>
<div class="b" style="left:2719px;top:1576px;width:2px;height:184px;background:#e0e0e0"></div>
<div class="b" style="left:2873px;top:1576px;width:2px;height:184px;background:#e0e0e0"></div>
<div class="b" style="left:3033px;top:1576px;width:2px;height:184px;background:#e0e0e0"></div>
<div class="b" style="left:3207px;top:1576px;width:2px;height:184px;background:#e0e0e0"></div>
<div class="b" style="left:3363px;top:1576px;width:2px;height:184px;background:#e0e0e0"></div>
<div class="b" style="left:3532px;top:1576px;width:2px;height:184px;background:#e0e0e0"></div>
<div class="b" style="left:3677px;top:1576px;width:2px;height:184px;background:#e0e0e0"></div>
<div class="b" style="left:3863px;top:1576px;width:2px;height:184px;background:#e0e0e0"></div>
<div class="b" style="left:4024px;top:1576px;width:2px;height:184px;background:#e0e0e0"></div>
<div class="b" style="left:4180px;top:1576px;width:2px;height:184px;background:#e0e0e0"></div>
<div class="t " style="left:83.3px;top:1587.2px;font-size:32px;line-height:40px;"><span class="lnk">6956.21</span></div>
<div class="t " style="left:243.3px;top:1587.2px;font-size:32px;line-height:40px;">The<br>Navigator<br>Times</div>
<div class="t " style="left:438.3px;top:1587.2px;font-size:32px;line-height:40px;">Naviga<br>Product<br>Group</div>
<div class="t " style="left:602.3px;top:1587.2px;font-size:32px;line-height:40px;"><span class="lnk">B&amp;H Photo</span></div>
<div class="t " style="left:840.3px;top:1587.2px;font-size:32px;line-height:40px;">B&amp;H Photo</div>
<div class="t " style="left:1232.3px;top:1587.2px;font-size:32px;line-height:40px;"><span class="lnk">2143</span></div>
<div class="t " style="left:1418.3px;top:1587.2px;font-size:32px;line-height:40px;">12/19/2024</div>
<div class="t " style="left:1710.3px;top:1587.2px;font-size:32px;line-height:40px;">12/19/2024</div>
<div class="t " style="left:2001.3px;top:1587.2px;font-size:32px;line-height:40px;">12/18/2024</div>
<div class="t " style="left:2293.3px;top:1587.2px;font-size:32px;line-height:40px;">Color<br>Display -<br>Column<br>Inch</div>
<div class="t " style="left:2490.3px;top:1587.2px;font-size:32px;line-height:40px;">1</div>
<div class="t " style="left:2611.3px;top:1587.2px;font-size:32px;line-height:40px;">IS</div>
<div class="t " style="left:2738.3px;top:1587.2px;font-size:32px;line-height:40px;">A-News<br>Section</div>
<div class="t " style="left:2892.3px;top:1587.2px;font-size:32px;line-height:40px;">Run of<br>Section</div>
<div class="t " style="left:3052.3px;top:1587.2px;font-size:32px;line-height:40px;">Print<br>Display,<br>Col x In</div>
<div class="t " style="left:3696.3px;top:1587.2px;font-size:32px;line-height:40px;">Bob<br>Haggle,<br>Donna<br>Beasley</div>
<div class="t " style="left:3882.3px;top:1587.2px;font-size:32px;line-height:40px;">Donna<br>Beasley</div>
<div class="b" style="left:4204px;top:1590px;width:42px;height:42px;background:#fff;border:3px solid #6b6b6b;border-radius:8px"></div>
<div class="b" style="left:63px;top:604px;width:2px;height:1144px;background:#e2e2e2"></div>
<div class="b" style="left:4267px;top:604px;width:2px;height:1144px;background:#e2e2e2"></div>
</div></body></html>
